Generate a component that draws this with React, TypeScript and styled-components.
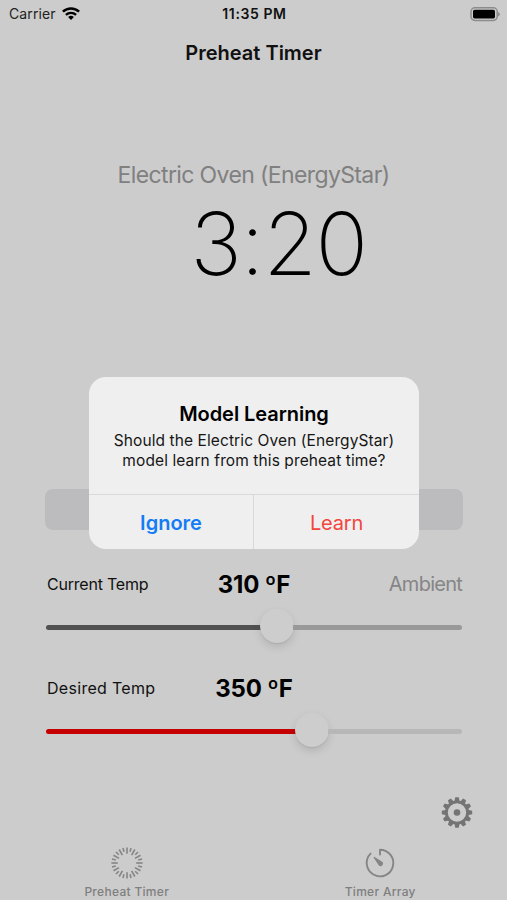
import React from "react";
import styled, { createGlobalStyle } from "styled-components";

const GlobalStyle = createGlobalStyle`
  html, body { margin: 0; padding: 0; background: #cccccc; }
  * { box-sizing: border-box; }
`;

const Screen = styled.div`
  position: relative;
  display: flex;
  flex-direction: column;
  width: 507px;
  height: 900px;
  overflow: hidden;
  background: #cccccc;
  color: #111111;
  font-family: Inter, "Liberation Sans", sans-serif;
`;

const StatusBar = styled.header`
  display: grid;
  grid-template-columns: 1fr auto 1fr;
  align-items: center;
  height: 28px;
  padding: 0 7px 0 9px;
  font-size: 14px;
  line-height: 28px;
`;

const Carrier = styled.div`
  display: flex;
  align-items: center;
  gap: 6px;
  letter-spacing: 0.1px;
  color: #222222;
`;

const Clock = styled.div`
  font-weight: 600;
  font-size: 14px;
  letter-spacing: 0.6px;
`;

const BatterySlot = styled.div`
  display: flex;
  justify-content: flex-end;
`;

const NavTitle = styled.h1`
  margin: 0;
  height: 48px;
  line-height: 50px;
  text-align: center;
  font-size: 20px;
  font-weight: 600;
`;

const Readout = styled.section`
  height: 413px;
  padding-top: 83px;
  text-align: center;
`;

const ModelName = styled.div`
  height: 30px;
  line-height: 32px;
  font-size: 23px;
  letter-spacing: -0.62px;
  color: #808080;
`;

const TimeLeft = styled.div`
  height: 108px;
  line-height: 110px;
  padding-left: 50px;
  font-size: 87px;
  font-weight: 150;
  letter-spacing: -1.4px;
  color: #000000;
`;

const StartButton = styled.div`
  flex: none;
  height: 41px;
  margin: 0 44px 0 45px;
  border-radius: 8px;
  background: #bcbcbe;
`;

const Controls = styled.section`
  display: flex;
  flex-direction: column;
  margin: 34px 45px 0 46px;
`;

const ControlHead = styled.div`
  display: grid;
  grid-template-columns: 1fr auto 1fr;
  align-items: center;
  height: 40px;
`;

const ControlName = styled.span<{ $spacing: number }>`
  padding-left: 1px;
  font-size: 16px;
  letter-spacing: ${(p) => p.$spacing}px;
`;

const Temperature = styled.span`
  font-size: 24px;
  font-weight: 700;
  color: #000000;
  letter-spacing: -0.15px;
`;

const Preset = styled.span`
  text-align: right;
  font-size: 20px;
  letter-spacing: -0.75px;
  color: #858585;
`;

const SliderRow = styled.div`
  display: flex;
  align-items: center;
  height: 46px;
  margin-bottom: 18px;
`;

const TrackPart = styled.div<{ $w?: number; $color: string }>`
  flex: ${(p) => (p.$w ? `0 0 ${p.$w}px` : "1")};
  height: 5px;
  background: ${(p) => p.$color};
  border-radius: ${(p) => (p.$w ? "3px 0 0 3px" : "0 3px 3px 0")};
`;

const Thumb = styled.div`
  flex: none;
  width: 34px;
  height: 34px;
  margin: -3px -1px 0;
  border-radius: 50%;
  background: #cdcdcd;
  box-shadow: 0 4px 9px rgba(0, 0, 0, 0.12), 0 1px 1px rgba(0, 0, 0, 0.07);
`;

const SettingsRow = styled.div`
  display: flex;
  justify-content: flex-end;
  height: 32px;
  margin-top: 24px;
  padding-right: 34px;
`;

const TabBar = styled.nav`
  display: grid;
  grid-template-columns: 1fr 1fr;
  margin-top: auto;
  height: 54px;
`;

const Tab = styled.div`
  display: flex;
  flex-direction: column;
  align-items: center;
  color: #7f7f7f;
  font-size: 12px;
  font-weight: 500;
  line-height: 15px;
  letter-spacing: 0.3px;
  gap: 4px;
`;

const AlertBox = styled.div`
  position: absolute;
  left: 89px;
  top: 377px;
  width: 330px;
  height: 172px;
  display: flex;
  flex-direction: column;
  border-radius: 17px;
  background: #efefef;
  overflow: hidden;
  text-align: center;
`;

const AlertBody = styled.div`
  height: 117px;
  padding-top: 24px;
`;

const AlertTitle = styled.div`
  height: 30px;
  line-height: 26px;
  font-size: 20px;
  font-weight: 600;
  letter-spacing: -0.05px;
  color: #000000;
`;

const AlertMessage = styled.div`
  font-size: 15.5px;
  line-height: 20px;
  letter-spacing: 0.1px;
  white-space: pre-line;
  color: #161616;
`;

const AlertActions = styled.div`
  display: grid;
  grid-template-columns: 164px 1fr;
  height: 55px;
  border-top: 1px solid #d9d9d9;
`;

const AlertAction = styled.div<{ $color: string; $strong?: boolean }>`
  line-height: 56px;
  font-size: 20px;
  font-weight: ${(p) => (p.$strong ? 600 : 400)};
  letter-spacing: ${(p) => (p.$strong ? 0 : -0.2)}px;
  color: ${(p) => p.$color};
  & + & { border-left: 1px solid #d9d9d9; }
`;

const Wifi = () => (
  <svg width="18" height="14" viewBox="0 0 18 14" fill="none" stroke="#000">
    <path d="M0.9 4.7A11.6 11.6 0 0 1 17.1 4.7" strokeWidth="2.5" />
    <path d="M3.9 7.9A7.4 7.4 0 0 1 14.1 7.9" strokeWidth="2.3" />
    <path d="M9 13L6.1 10.1A4.1 4.1 0 0 1 11.9 10.1Z" fill="#000" stroke="none" />
  </svg>
);

const Battery = () => (
  <svg width="30" height="15" viewBox="0 0 30 15">
    <rect x="1" y="0.8" width="26.2" height="12.6" rx="3.8" fill="none" stroke="#8c8c8c" strokeWidth="1.5" />
    <rect x="3" y="2.8" width="22" height="8.6" rx="1.6" fill="#000" />
    <path d="M28 5Q29.8 5.7 29.8 7.2T28 9.4Z" fill="#8c8c8c" />
  </svg>
);

const range = (n: number) => Array.from({ length: n }, (_, i) => i);

const Gear = () => (
  <svg width="32" height="32" viewBox="-16 -16.5 32 32">
    {range(12).map((i) => (
      <path key={i} d="M-2.8 -10.5L-1.7 -15.2H1.7L2.8 -10.5Z" fill="#747474" transform={`rotate(${i * 30})`} />
    ))}
    <circle r="10.6" fill="none" stroke="#747474" strokeWidth="2.8" />
    <circle r="3.3" fill="#747474" />
  </svg>
);

const Rays = () => (
  <svg width="34" height="34" viewBox="-17 -17 34 34" stroke="#858585">
    {range(24).map((i) => (
      <line
        key={i}
        y1={i % 2 ? -11.6 : -9.2}
        y2="-15.6"
        strokeWidth={1.6}
        transform={`rotate(${i * 15})`}
      />
    ))}
  </svg>
);

const Dial = () => (
  <svg width="34" height="34" viewBox="-17 -17 34 34" fill="none" stroke="#858585" strokeWidth="1.9">
    <path d="M0 -8.4V-13.3A13.3 13.3 0 1 1 -9.4 -9.4" strokeLinecap="round" strokeLinejoin="round" />
    <path d="M-5.8 -5.6L1.9 -0.8A1.9 1.9 0 0 1 -0.8 1.9Z" fill="#858585" strokeWidth="1.2" strokeLinejoin="round" />
  </svg>
);

type ControlProps = {
  name: string;
  spacing: number;
  value: string;
  preset?: string;
  filled: number;
  color: string;
  rest: string;
};

const Control = ({ name, spacing, value, preset, filled, color, rest }: ControlProps) => (
  <>
    <ControlHead>
      <ControlName $spacing={spacing}>{name}</ControlName>
      <Temperature>{value}</Temperature>
      <Preset>{preset}</Preset>
    </ControlHead>
    <SliderRow>
      <TrackPart $w={filled} $color={color} />
      <Thumb />
      <TrackPart $color={rest} />
    </SliderRow>
  </>
);

export default function App() {
  return (
    <Screen>
      <GlobalStyle />
      <StatusBar>
        <Carrier>Carrier <Wifi /></Carrier>
        <Clock>11:35 PM</Clock>
        <BatterySlot><Battery /></BatterySlot>
      </StatusBar>
      <NavTitle>Preheat Timer</NavTitle>
      <Readout>
        <ModelName>Electric Oven (EnergyStar)</ModelName>
        <TimeLeft>3:20</TimeLeft>
      </Readout>
      <StartButton />
      <Controls>
        <Control name="Current Temp" spacing={-0.22} value="310 ºF" preset="Ambient" filled={215} color="#515151" rest="#999999" />
        <Control name="Desired Temp" spacing={0.3} value="350 ºF" filled={250} color="#c60000" rest="#b7b7b7" />
      </Controls>
      <SettingsRow><Gear /></SettingsRow>
      <TabBar>
        <Tab><Rays />Preheat Timer</Tab>
        <Tab><Dial />Timer Array</Tab>
      </TabBar>
      <AlertBox>
        <AlertBody>
          <AlertTitle>Model Learning</AlertTitle>
          <AlertMessage>{"Should the Electric Oven (EnergyStar)\nmodel learn from this preheat time?"}</AlertMessage>
        </AlertBody>
        <AlertActions>
          <AlertAction $color="#147cf5" $strong>Ignore</AlertAction>
          <AlertAction $color="#f2453d">Learn</AlertAction>
        </AlertActions>
      </AlertBox>
    </Screen>
  );
}
